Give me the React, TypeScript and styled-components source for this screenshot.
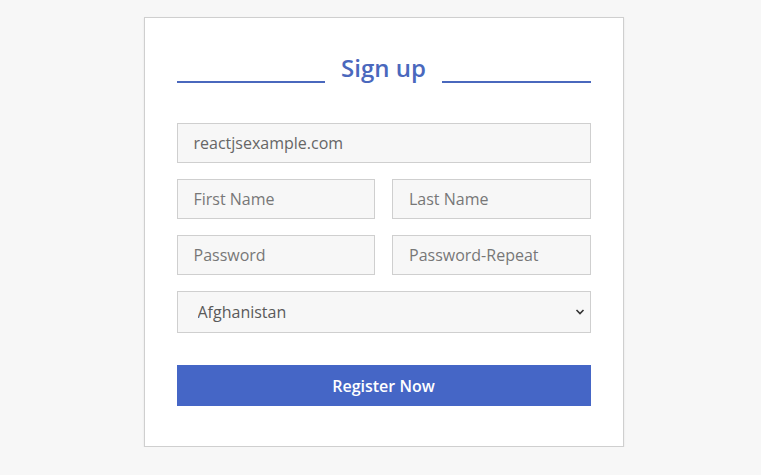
import styled, { createGlobalStyle } from "styled-components";

const GlobalStyle = createGlobalStyle`
  body {
    margin: 0;
    background: #f7f7f7;
    font-family: "Open Sans", "Noto Sans", sans-serif;
  }
  * {
    box-sizing: border-box;
  }
`;

const Page = styled.div`
  display: flex;
  justify-content: center;
  padding: 17px 0 0 6px;
`;

const Card = styled.form`
  width: 480px;
  background: #fff;
  border: 1px solid #cfcfcf;
  box-shadow: 0 1px 2px rgba(0, 0, 0, 0.08);
  padding: 32px 32px 40px;
  display: flex;
  flex-direction: column;
`;

const Heading = styled.div`
  display: flex;
  align-items: flex-end;
  gap: 16px;
  margin-bottom: 37px;
`;

const Line = styled.span`
  flex: 1;
  height: 2px;
  background: #4a68bd;
  margin-bottom: 3px;
`;

const Title = styled.h2`
  margin: 0;
  font-size: 24px;
  line-height: 36px;
  font-weight: 600;
  color: #4a68bd;
`;

const Fields = styled.div`
  display: grid;
  grid-template-columns: 1fr 1fr;
  gap: 16px 17px;
`;

const Input = styled.input<{ $wide?: boolean }>`
  grid-column: ${(p) => (p.$wide ? "1 / -1" : "auto")};
  height: 40px;
  width: 100%;
  padding: 0 16px;
  border: 1px solid #cfcfcf;
  background: #f7f7f7;
  font-family: inherit;
  font-size: 16px;
  color: #666;
  outline: none;

  &::placeholder {
    color: #777;
  }
`;

const SelectWrap = styled.div`
  grid-column: 1 / -1;
  position: relative;
`;

const Select = styled.select`
  appearance: none;
  width: 100%;
  height: 42px;
  padding: 0 20px;
  border: 1px solid #cfcfcf;
  background: #f7f7f7;
  font-family: inherit;
  font-size: 16px;
  color: #5a5a5a;
  outline: none;
`;

const Chevron = styled.svg`
  position: absolute;
  right: 6px;
  top: 17px;
  pointer-events: none;
`;

const Button = styled.button`
  margin-top: 32px;
  height: 41px;
  border: none;
  background: #4566c6;
  color: #fff;
  font-family: inherit;
  font-size: 16px;
  font-weight: 600;
  cursor: pointer;
`;

export default function App() {
  return (
    <>
      <GlobalStyle />
      <Page>
        <Card onSubmit={(e) => e.preventDefault()}>
          <Heading>
            <Line />
            <Title>Sign up</Title>
            <Line />
          </Heading>
          <Fields>
            <Input $wide type="email" defaultValue="reactjsexample.com" />
            <Input type="text" placeholder="First Name" />
            <Input type="text" placeholder="Last Name" />
            <Input type="password" placeholder="Password" />
            <Input type="password" placeholder="Password-Repeat" />
            <SelectWrap>
              <Select defaultValue="Afghanistan">
                <option>Afghanistan</option>
                <option>Albania</option>
                <option>Algeria</option>
              </Select>
              <Chevron width="10" height="8" viewBox="0 0 10 8">
                <path d="M1.5 2 L5 5.5 L8.5 2" fill="none" stroke="#333" strokeWidth="1.6" />
              </Chevron>
            </SelectWrap>
          </Fields>
          <Button type="submit">Register Now</Button>
        </Card>
      </Page>
    </>
  );
}
